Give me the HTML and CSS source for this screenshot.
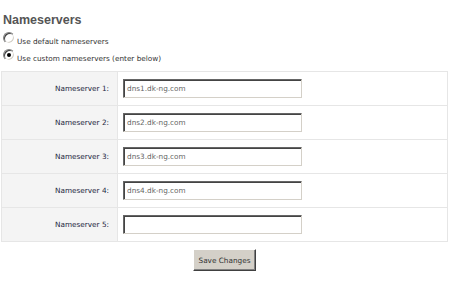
FILE: index.html
```html
<!DOCTYPE html>
<html lang="en">
<head>
    <meta charset="UTF-8">
    <title>Nameservers</title>
    <link rel="stylesheet" href="styles.css">
</head>
<body>
    <div class="page">
        <h2 class="title">Nameservers</h2>
        <div class="choice">
            <label class="option"><input type="radio" name="ns" class="radio"><span>Use default nameservers</span></label>
            <label class="option"><input type="radio" name="ns" class="radio" checked><span>Use custom nameservers (enter below)</span></label>
        </div>
        <table class="ns-table">
            <tr>
                <td class="ns-label">Nameserver 1:</td>
                <td class="ns-field"><input type="text" class="ns-input" value="dns1.dk-ng.com"></td>
            </tr>
            <tr>
                <td class="ns-label">Nameserver 2:</td>
                <td class="ns-field"><input type="text" class="ns-input" value="dns2.dk-ng.com"></td>
            </tr>
            <tr>
                <td class="ns-label">Nameserver 3:</td>
                <td class="ns-field"><input type="text" class="ns-input" value="dns3.dk-ng.com"></td>
            </tr>
            <tr>
                <td class="ns-label">Nameserver 4:</td>
                <td class="ns-field"><input type="text" class="ns-input" value="dns4.dk-ng.com"></td>
            </tr>
            <tr>
                <td class="ns-label">Nameserver 5:</td>
                <td class="ns-field"><input type="text" class="ns-input" value=""></td>
            </tr>
        </table>
        <div class="actions">
            <button type="submit" class="save-btn">Save Changes</button>
        </div>
    </div>
</body>
</html>
```

FILE: styles.css
```css
body {
    margin: 0;
    padding: 0;
    background: #fff;
    font-family: "DejaVu Sans", Verdana, sans-serif;
    font-size: 7.3px;
}

.page {
    width: 447px;
    padding: 13px 0 0 1px;
}

.title {
    margin: 0 0 5px 2px;
    font-family: "Liberation Sans", Arial, sans-serif;
    font-size: 12.5px;
    font-weight: bold;
    color: #555;
    line-height: 14px;
}

.choice {
    display: flex;
    flex-direction: column;
    margin: 0 0 5px 2px;
}

.option {
    display: flex;
    align-items: flex-start;
    height: 17px;
    color: #333;
    line-height: 12px;
}

.option span {
    padding-top: 4px;
    margin-left: 2px;
}

/* classic 3D radio */
.radio {
    appearance: none;
    -webkit-appearance: none;
    width: 12px;
    height: 12px;
    margin: 0;
    border-radius: 50%;
    border: 1px solid;
    border-color: #808080 #fff #fff #808080;
    box-shadow: inset 1px 1px 0 #404040, inset -1px -1px 0 #d4d0c8;
    background: #fff;
    position: relative;
}

.radio:checked::after {
    content: "";
    position: absolute;
    left: 3px;
    top: 3px;
    width: 4px;
    height: 4px;
    border-radius: 50%;
    background: #000;
}

.ns-table {
    width: 447px;
    border-collapse: collapse;
    border: 1px solid #e6e6e6;
}

.ns-table tr {
    height: 34px;
}

.ns-table td {
    border: 1px solid #e6e6e6;
    padding: 0;
}

.ns-label {
    width: 107px;
    padding-right: 8px !important;
    text-align: right;
    background: #f4f4f4;
    color: #1c2640;
}

.ns-field {
    padding-left: 5px !important;
    background: #fff;
}

.ns-input {
    display: block;
    box-sizing: border-box;
    width: 179px;
    height: 19px;
    margin: 0;
    padding: 0 3px;
    border: 1px solid;
    border-color: #666 #d4d0c8 #d4d0c8 #666;
    box-shadow: inset 1px 1px 0 #444;
    font-family: "DejaVu Sans", Verdana, sans-serif;
    font-size: 7.3px;
    color: #666;
    outline: none;
}

.actions {
    display: flex;
    justify-content: center;
    padding-top: 7px;
}

.save-btn {
    height: 22px;
    padding: 0 5px;
    background: #d4d0c8;
    border: 1px solid;
    border-color: #fff #404040 #404040 #fff;
    box-shadow: inset -1px -1px 0 #808080;
    font-family: "DejaVu Sans", Verdana, sans-serif;
    font-size: 7.3px;
    color: #333;
}
```
